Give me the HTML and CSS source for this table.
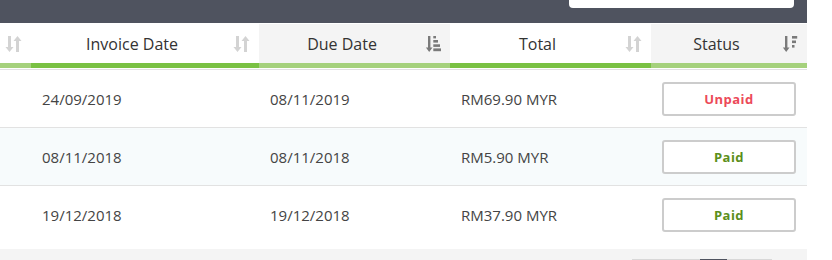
FILE: index.html
```html
<!DOCTYPE html>
<html lang="en">
<head>
<meta charset="utf-8">
<title>Invoices</title>
<link rel="stylesheet" href="styles.css">
</head>
<body>
<div class="page">
  <div class="topbar">
    <div class="search"></div>
  </div>
  <div class="table-wrap">
    <table class="invoices">
      <colgroup>
        <col class="c-first">
        <col class="c-inv">
        <col class="c-due">
        <col class="c-total">
        <col class="c-status">
      </colgroup>
      <thead>
        <tr>
          <th class="th-plain"><div class="th-in"><span class="label"></span>
            <svg class="ico ico-light" viewBox="0 0 17 16" width="17" height="16"><path d="M3 0h3v11h2.5L4.5 16 0.5 11H3z"/><path d="M12.5 0l4 5H14v11h-3V5H8.5z"/></svg></div></th>
          <th class="th-plain th-active"><div class="th-in"><span class="label">Invoice Date</span>
            <svg class="ico ico-light" viewBox="0 0 17 16" width="17" height="16"><path d="M3 0h3v11h2.5L4.5 16 0.5 11H3z"/><path d="M12.5 0l4 5H14v11h-3V5H8.5z"/></svg></div></th>
          <th class="th-grey"><div class="th-in"><span class="label">Due Date</span>
            <svg class="ico ico-dark" viewBox="0 0 16 16" width="16" height="16"><path d="M3 0h2.4v11.5H7.5L4.2 16 0.9 11.5H3z"/><rect x="8.3" y="0" width="2.7" height="2.4"/><rect x="8.3" y="4" width="4.7" height="2.6"/><rect x="8.3" y="8.3" width="6.7" height="2.6"/><rect x="8.3" y="12.4" width="7.7" height="2.8"/></svg></div></th>
          <th class="th-plain th-active"><div class="th-in"><span class="label">Total</span>
            <svg class="ico ico-light" viewBox="0 0 17 16" width="17" height="16"><path d="M3 0h3v11h2.5L4.5 16 0.5 11H3z"/><path d="M12.5 0l4 5H14v11h-3V5H8.5z"/></svg></div></th>
          <th class="th-grey"><div class="th-in"><span class="label">Status</span>
            <svg class="ico ico-dark" viewBox="0 0 16 16" width="16" height="16"><path d="M3 0h2.4v11.5H7.5L4.2 16 0.9 11.5H3z"/><rect x="10" y="0" width="5.2" height="2.6"/><rect x="10" y="4.5" width="4" height="2.6"/><rect x="10" y="9" width="2.5" height="2.6"/></svg></div></th>
        </tr>
      </thead>
      <tbody>
        <tr>
          <td></td>
          <td>24/09/2019</td>
          <td>08/11/2019</td>
          <td>RM69.90 MYR</td>
          <td><div class="status status-unpaid">Unpaid</div></td>
        </tr>
        <tr class="alt">
          <td></td>
          <td>08/11/2018</td>
          <td>08/11/2018</td>
          <td>RM5.90 MYR</td>
          <td><div class="status status-paid">Paid</div></td>
        </tr>
        <tr>
          <td></td>
          <td>19/12/2018</td>
          <td>19/12/2018</td>
          <td>RM37.90 MYR</td>
          <td><div class="status status-paid">Paid</div></td>
        </tr>
      </tbody>
    </table>
  </div>
  <div class="footer">
    <div class="pager">
      <span class="pg"></span>
      <span class="pg pg-current"></span>
      <span class="pg pg-rest"></span>
    </div>
  </div>
</div>
</body>
</html>
```
FILE: styles.css
```css
* { box-sizing: border-box; }

html, body {
  margin: 0;
  padding: 0;
  background: #ffffff;
}

body {
  font-family: "Open Sans", "Noto Sans", "Liberation Sans", sans-serif;
  color: #444444;
  overflow: hidden;
}

.page {
  width: 807px;
}

.topbar {
  height: 23px;
  background: #4f535f;
  display: flex;
  justify-content: flex-end;
  padding-right: 13px;
}

.search {
  width: 225px;
  height: 8px;
  background: #ffffff;
  border-radius: 0 0 4px 4px;
}

.table-wrap {
  padding-bottom: 6px;
  background: #ffffff;
}

.invoices {
  width: 807px;
  table-layout: fixed;
  border-collapse: separate;
  border-spacing: 0;
}

.c-first { width: 31px; }
.c-inv { width: 228px; }
.c-due { width: 191px; }
.c-total { width: 201px; }
.c-status { width: 156px; }

.invoices th {
  padding: 0 0 6px 0;
  border-top: 1px solid #ffffff;
  font-weight: 400;
  font-size: 16px;
  color: #333333;
  background-color: #ffffff;
  background-image: linear-gradient(to top, #ffffff 0, #ffffff 1px, #a5d17c 1px, #a5d17c 6px, transparent 6px);
}

.invoices th.th-grey {
  background-color: #f4f4f4;
}

.invoices th.th-active {
  background-image: linear-gradient(to top, #ffffff 0, #ffffff 1px, #7ac143 1px, #7ac143 6px, transparent 6px);
}

.th-in {
  height: 39px;
  display: flex;
  align-items: center;
  padding-right: 9px;
}

.label {
  flex: 1;
  text-align: center;
  white-space: nowrap;
}

.ico {
  flex: none;
  display: block;
}

.ico-light { fill: #d3d3d3; }
.ico-dark { fill: #7a7a7a; }

.invoices td {
  height: 58px;
  padding: 0 11px;
  font-size: 15px;
  color: #444444;
  vertical-align: middle;
  border-bottom: 1px solid #e2e2e2;
  white-space: nowrap;
}

.invoices tbody tr:first-child td {
  border-top: 1px solid #e2e2e2;
  height: 59px;
}

.invoices tbody tr:last-child td {
  border-bottom: none;
  height: 57px;
}

.invoices tr.alt td {
  background: #f7fbfc;
}

.status {
  height: 34px;
  border: 2px solid #cccccc;
  border-radius: 3px;
  background: #ffffff;
  display: flex;
  align-items: center;
  justify-content: center;
  font-size: 13px;
  font-weight: 700;
  letter-spacing: 0.5px;
}

.status-unpaid { color: #ec4a59; }
.status-paid { color: #5c8f1b; }

.footer {
  height: 12px;
  background: #f4f4f4;
  padding: 10px 0 0 632px;
}

.pager {
  display: flex;
  width: 140px;
}

.pg {
  display: block;
  height: 1px;
  background: #d8d8d8;
  width: 68px;
}

.pg-current {
  width: 27px;
  background: #4f535f;
}

.pg-rest {
  width: 45px;
}
```
